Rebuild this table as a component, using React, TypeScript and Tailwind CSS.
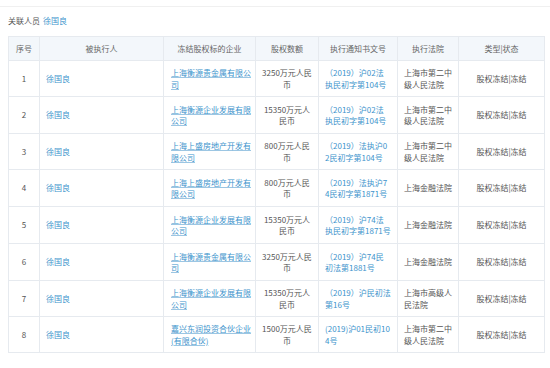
import React from "react";

type Row = {
  no: string;
  company: string[];
  amount: string[];
  caseNo: string[];
  court: string[];
};

const rows: Row[] = [
  { no: "1", company: ["上海衡源贵金属有限公", "司"], amount: ["3250万元人民", "币"], caseNo: ["（2019）沪02法", "执民初字第104号"], court: ["上海市第二中", "级人民法院"] },
  { no: "2", company: ["上海衡源企业发展有限", "公司"], amount: ["15350万元人", "民币"], caseNo: ["（2019）沪02法", "执民初字第104号"], court: ["上海市第二中", "级人民法院"] },
  { no: "3", company: ["上海上盛房地产开发有", "限公司"], amount: ["800万元人民", "币"], caseNo: ["（2019）法执沪0", "2民初字第104号"], court: ["上海市第二中", "级人民法院"] },
  { no: "4", company: ["上海上盛房地产开发有", "限公司"], amount: ["800万元人民", "币"], caseNo: ["（2019）法执沪7", "4民初字第1871号"], court: ["上海金融法院"] },
  { no: "5", company: ["上海衡源企业发展有限", "公司"], amount: ["15350万元人", "民币"], caseNo: ["（2019）沪74法", "执民初字第1871号"], court: ["上海金融法院"] },
  { no: "6", company: ["上海衡源贵金属有限公", "司"], amount: ["3250万元人民", "币"], caseNo: ["（2019）沪74民", "初法第1881号"], court: ["上海金融法院"] },
  { no: "7", company: ["上海衡源企业发展有限", "公司"], amount: ["15350万元人", "民币"], caseNo: ["（2019）沪民初法", "第16号"], court: ["上海市高级人", "民法院"] },
  { no: "8", company: ["嘉兴东润投资合伙企业", "(有限合伙)"], amount: ["1500万元人民", "币"], caseNo: ["(2019)沪01民初10", "4号"], court: ["上海市第二中", "级人民法院"] },
];

const Lines = ({ lines }: { lines: string[] }) => (
  <>
    {lines.map((l, i) => (
      <div key={i} className="whitespace-nowrap">
        {l}
      </div>
    ))}
  </>
);

const heights = [36, 37, 36, 37, 37, 37, 36, 36];

export default function App() {
  const font = { fontFamily: '"Noto Sans CJK SC", "Noto Sans", sans-serif' };
  const td = "border border-[#e6eaef] align-middle p-0";
  const th = "border border-[#e6eaef] bg-[#f3f7fb] font-normal text-[#666] p-0 text-center";
  return (
    <div className="w-[550px] h-[368px] bg-white overflow-hidden text-[8px] leading-[11.5px] text-[#555]" style={font}>
      <div className="h-[7px] border-b border-[#f0f0f0]" />
      <div className="h-[29px] flex items-center pl-[8px] pb-[1px]">
        <span className="text-[#555]">关联人员</span>
        <span className="ml-[3px] text-[#3d93cc]">徐国良</span>
      </div>
      <table className="ml-[8px] border-collapse table-fixed w-[536px]">
        <colgroup>
          <col className="w-[31px]" />
          <col className="w-[124px]" />
          <col className="w-[92px]" />
          <col className="w-[63px]" />
          <col className="w-[79px]" />
          <col className="w-[61px]" />
          <col className="w-[86px]" />
        </colgroup>
        <thead>
          <tr className="h-[24px]">
            <th className={th}>序号</th>
            <th className={th}>被执行人</th>
            <th className={th}>冻结股权标的企业</th>
            <th className={th}>股权数额</th>
            <th className={th}>执行通知书文号</th>
            <th className={th}>执行法院</th>
            <th className={th}>类型|状态</th>
          </tr>
        </thead>
        <tbody>
          {rows.map((r, i) => (
            <tr key={r.no} style={{ height: heights[i] }}>
              <td className={`${td} text-center`}>{r.no}</td>
              <td className={`${td} pl-[6px] text-[#3d93cc]`}>徐国良</td>
              <td className={`${td} pl-[7px] text-[#3d93cc] underline decoration-[#9cc6e3] underline-offset-[1px]`}>
                <Lines lines={r.company} />
              </td>
              <td className={`${td} text-center`}>
                <Lines lines={r.amount} />
              </td>
              <td className={`${td} pl-[6px] text-[#3d93cc]`}>
                <Lines lines={r.caseNo} />
              </td>
              <td className={`${td} pl-[6px]`}>
                <Lines lines={r.court} />
              </td>
              <td className={`${td} text-center`}>股权冻结|冻结</td>
            </tr>
          ))}
        </tbody>
      </table>
    </div>
  );
}
